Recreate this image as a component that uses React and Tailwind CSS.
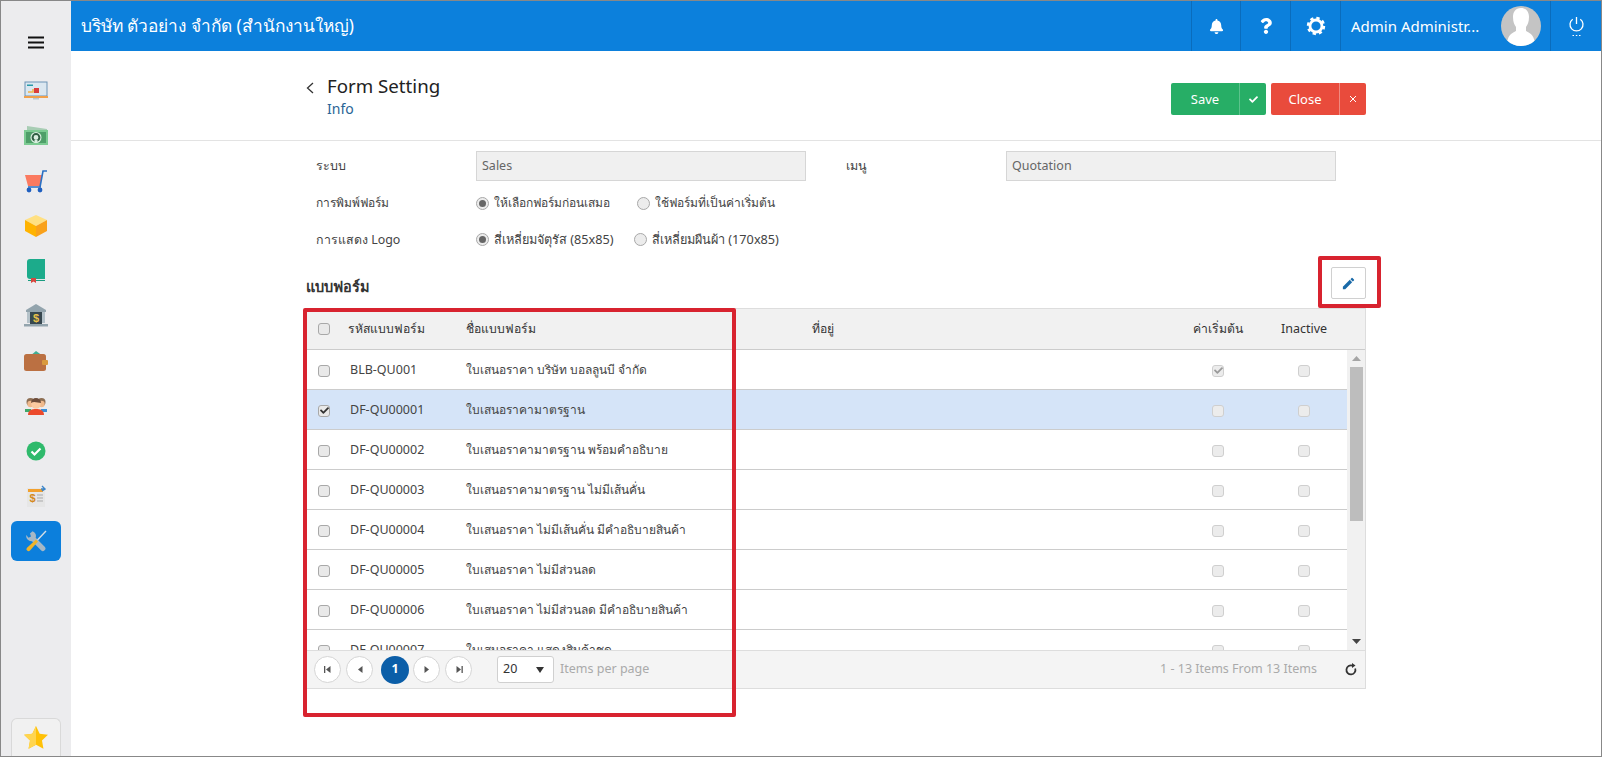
import React from "react";
import { FaBell, FaQuestion, FaCheck } from "react-icons/fa";
import { MdEdit } from "react-icons/md";

const Hamburger = () => (
  <svg width="16" height="13" viewBox="0 0 16 13"><path d="M0 1.500h16M0 6.500h16M0 11.500h16" stroke="#111" strokeWidth="2" /></svg>
);
const Board = () => (
  <svg width="24" height="20" viewBox="0 0 24 20"><rect x="1" y="1" width="22" height="14" fill="#dbe7f0" stroke="#6c93b5" strokeWidth="1" /><rect x="3" y="3.500" width="6" height="1.500" fill="#2b9aa8" /><rect x="10" y="7" width="5" height="5" fill="#d93c3c" /><path d="M4 11h5v-3" stroke="#f0b24a" strokeWidth="1.500" fill="none" /><rect x="0" y="15" width="24" height="2" fill="#f0a04b" /><rect x="9" y="17" width="6" height="1.500" fill="#b8c6d2" /></svg>
);
const Money = () => (
  <svg width="24" height="20" viewBox="0 0 24 20"><path d="M3 0l20 3v3H3z" fill="#a8cdb4" /><rect x="0" y="4" width="24" height="15" fill="#7ccb92" /><rect x="2" y="6" width="20" height="11" fill="#4f9f69" /><circle cx="12" cy="11.500" r="5.500" fill="#d9efdf" /><circle cx="12" cy="11.500" r="3.400" fill="none" stroke="#2f5f42" strokeWidth="2" /><rect x="10.500" y="14" width="3" height="3" fill="#d9efdf" /></svg>
);
const Cart = () => (
  <svg width="24" height="24" viewBox="0 0 24 24"><path d="M1 6h17l-2 11H4z" fill="#fb7a60" /><path d="M16 18L19 2h4" stroke="#2a70c4" strokeWidth="1.600" fill="none" /><path d="M4 18h13" stroke="#2a70c4" strokeWidth="1.500" /><circle cx="5" cy="21" r="2.400" fill="#1f5fc0" /><circle cx="16" cy="21" r="2.400" fill="#1f5fc0" /></svg>
);
const Box = () => (
  <svg width="24" height="24" viewBox="0 0 24 24"><path d="M12 1l11 5-11 6L1 6z" fill="#ffe082" /><path d="M1 6l11 6v11L1 17z" fill="#ffb300" /><path d="M23 6l-11 6v11l11-6z" fill="#f9a11b" /></svg>
);
const Book = () => (
  <svg width="18" height="24" viewBox="0 0 18 24"><path d="M0 3a3 3 0 0 1 3-3h15v20H3a3 3 0 0 1-3-3z" fill="#1cab8b" /><path d="M1 20h17v1.500H1z" fill="#dfe8e6" /><path d="M1 21h17v1H1z" fill="#1a9c80" /><path d="M4 19h5v5l-2.500-1.500L4 24z" fill="#d5483f" /></svg>
);
const Bank = () => (
  <svg width="24" height="23" viewBox="0 0 24 23"><path d="M12 0l10 6v2H2V6z" fill="#93a4ad" /><rect x="3" y="8" width="3" height="11" fill="#b5c2c9" /><rect x="18" y="8" width="3" height="11" fill="#b5c2c9" /><rect x="6" y="8" width="12" height="12" fill="#37474f" /><text x="12" y="18" textAnchor="middle" fontSize="11" fontWeight="700" fill="#e6c04a" fontFamily="Liberation Sans">$</text><rect x="0" y="20" width="24" height="2.500" fill="#93a4ad" /></svg>
);
const Wallet = () => (
  <svg width="24" height="22" viewBox="0 0 24 22"><path d="M6 6l6-5 7 5z" fill="#3fae92" /><rect x="0" y="4" width="22" height="17" rx="2.500" fill="#bb7042" /><rect x="18" y="10" width="6" height="5" rx="1" fill="#d99a3e" /></svg>
);
const People = () => (
  <svg width="22" height="20" viewBox="0 0 22 20"><circle cx="5.500" cy="6" r="4" fill="#8d6e52" /><circle cx="16.500" cy="6" r="4" fill="#8d6e52" /><circle cx="5.500" cy="8" r="3.200" fill="#f0b98c" /><circle cx="16.500" cy="8" r="3.200" fill="#f0b98c" /><path d="M0 13h6v3H0z" fill="#41a86a" /><path d="M16 13h6v3h-6z" fill="#3b8fd6" /><path d="M3 19c0-5 4-6 8-6s8 1 8 6z" fill="#ec4a2c" /><circle cx="11" cy="8" r="4.800" fill="#fbcaa0" /><path d="M6 7a5 5 0 0 1 10 0c-3 0-7-2-10 0z" fill="#6d4c3a" /></svg>
);
const CheckCircle = () => (
  <svg width="20" height="20" viewBox="0 0 20 20"><circle cx="10" cy="10" r="9.500" fill="#2fba6c" /><path d="M5.500 10.500l3 3 6-6" stroke="#fff" strokeWidth="2.200" fill="none" /></svg>
);
const Report = () => (
  <svg width="20" height="22" viewBox="0 0 20 22"><rect x="1" y="3" width="18" height="19" fill="#e6e6e6" /><rect x="2" y="4" width="15" height="3" fill="#f2a02e" /><path d="M15 4h3M16 1l3 3-3 2" stroke="#3f86c8" strokeWidth="1.400" fill="none" /><text x="6.500" y="17" textAnchor="middle" fontSize="11" fontWeight="700" fill="#d48a1e" fontFamily="Liberation Sans">$</text><path d="M11 10h6M11 13h6M11 16h6" stroke="#a9a9a9" strokeWidth="1" /></svg>
);
const Tools = () => (
  <svg width="22" height="22" viewBox="0 0 22 22"><path d="M7.500 1.200L5 3.500l1 3-2.500 1.300L1.300 5A5.200 5.200 0 0 0 7 11.200l9 9a2.400 2.400 0 0 0 3.700-3.500l-9-9A5.200 5.200 0 0 0 7.500 1.200z" fill="#a5b8c6" /><path d="M21 1l-8.500 9" stroke="#d5dee5" strokeWidth="1.400" /><path d="M11 9.500l2 2L5 20.500a1.900 1.900 0 0 1-3-2.800z" fill="#f0b429" /></svg>
);
const Star = () => (
  <svg width="24" height="23" viewBox="0 0 26 25"><path d="M13 0l4 8.300 9 1.200-6.500 6.300 1.600 9L13 20.500 4.900 24.800l1.600-9L0 9.500l9-1.200z" fill="#ffc107" /><path d="M13 0v20.500L4.900 24.800l1.600-9L0 9.500l9-1.200z" fill="#ffd54f" /></svg>
);

const sideIcons = [Board, Money, Cart, Box, Book, Bank, Wallet, People, CheckCircle, Report];

const Gear = () => (
  <svg width="20" height="20" viewBox="0 0 20 20"><circle cx="10" cy="10" r="6" fill="none" stroke="#fff" strokeWidth="2.800" /><circle cx="10" cy="10" r="8" fill="none" stroke="#fff" strokeWidth="2.400" strokeDasharray="3.300 3" /></svg>
);
const Power = () => (
  <svg width="15" height="21" viewBox="0 0 15 21" fill="none" stroke="#fff" strokeWidth="1.300"><path d="M7.500 1v7" /><path d="M3.700 3.200a6.500 6.500 0 1 0 7.600 0" /><path d="M3.500 19.500h1.500M6.800 19.500h1.500M10 19.500h1.500" strokeWidth="1" /></svg>
);
const Avatar = () => (
  <span className="w-[40px] h-[40px] rounded-full bg-[#c4c4c4] overflow-hidden flex">
    <svg width="40" height="40" viewBox="0 0 40 40"><path d="M20 2c5.500 0 8 4 8 9 0 5-1.500 8-3 10v4c3 2 9 3 9 15H6c0-12 6-13 9-15v-4c-1.500-2-3-5-3-10s2.500-9 8-9z" fill="#fff" /></svg>
  </span>
);

const Checkbox = ({ checked, faded }) => (
  <span className={"w-[12px] h-[12px] rounded-[3px] border flex items-center justify-center " + (faded ? "border-[#cfcfcf] bg-[#ececec]" : "border-[#a8a8a8] bg-[#e9e9e9]")}>
    {checked && <FaCheck className={"text-[9px] " + (faded ? "text-[#9a9a9a]" : "text-[#333]")} />}
  </span>
);

const Radio = ({ on }) => (
  <span className="w-[13px] h-[13px] rounded-full border border-[#a8a8a8] bg-[#ececec] flex items-center justify-center">
    {on && <span className="w-[7px] h-[7px] rounded-full bg-[#666]" />}
  </span>
);

const rows = [
  ["BLB-QU001", "ใบเสนอราคา บริษัท บอลลูนบี จำกัด"],
  ["DF-QU00001", "ใบเสนอราคามาตรฐาน"],
  ["DF-QU00002", "ใบเสนอราคามาตรฐาน พร้อมคำอธิบาย"],
  ["DF-QU00003", "ใบเสนอราคามาตรฐาน ไม่มีเส้นคั่น"],
  ["DF-QU00004", "ใบเสนอราคา ไม่มีเส้นคั่น มีคำอธิบายสินค้า"],
  ["DF-QU00005", "ใบเสนอราคา ไม่มีส่วนลด"],
  ["DF-QU00006", "ใบเสนอราคา ไม่มีส่วนลด มีคำอธิบายสินค้า"],
  ["DF-QU00007", "ใบเสนอราคา แสดงสินค้าชุด"],
];

const PagerBtn = ({ d, bar }) => (
  <span className="w-[27px] h-[27px] rounded-full border border-[#d5d5d5] bg-white flex items-center justify-center">
    <svg width="10" height="9" viewBox="0 0 10 9" fill="#555">
      {d === "l" ? <path d="M7.500 1v7L3 4.500z" /> : <path d="M2.500 1v7L7 4.500z" />}
      {bar && <rect x={d === "l" ? 1 : 7.5} y="1" width="1.300" height="7" />}
    </svg>
  </span>
);

export default function App() {
  return (
    <div className="relative w-[1602px] h-[757px] overflow-hidden border border-[#888] flex bg-white text-[#444] text-[12.500px] font-['Noto_Sans','DejaVu_Sans',sans-serif]">
      <aside className="w-[70px] shrink-0 bg-[#ececee] flex flex-col items-center">
        <div className="h-[67px] pt-[16px] flex items-center justify-center"><Hamburger /></div>
        <div className="flex flex-col items-center w-full">
          {sideIcons.map((Icon, i) => (
            <div key={i} className="h-[45px] w-full flex items-center justify-center"><Icon /></div>
          ))}
        </div>
        <div className="mt-[3px] w-[50px] h-[40px] rounded-[6px] bg-[#0c7fdc] flex items-center justify-center"><Tools /></div>
        <div className="mt-auto w-[50px] h-[38px] rounded-t-[6px] border border-b-0 border-[#d9d9d9] bg-[#f1f1f1] flex items-center justify-center"><Star /></div>
      </aside>

      <main className="flex-1 flex flex-col min-w-0">
        <header className="h-[50px] bg-[#0c80dc] flex items-center text-white shrink-0">
          <div className="flex-1 pl-[10px] text-[17.300px]">บริษัท ตัวอย่าง จำกัด (สำนักงานใหญ่)</div>
          <div className="w-[49px] h-full border-l border-[#0a6cbc] flex items-center justify-center"><FaBell className="text-[15px]" /></div>
          <div className="w-[50px] h-full border-l border-[#0a6cbc] flex items-center justify-center"><FaQuestion className="text-[16px]" /></div>
          <div className="w-[50px] h-full border-l border-[#0a6cbc] flex items-center justify-center"><Gear /></div>
          <div className="w-[210px] h-full border-l border-[#0a6cbc] flex items-center pl-[10px] gap-[20px]">
            <span className="w-[130px] text-[15px] whitespace-nowrap">Admin Administr...</span>
            <Avatar />
          </div>
          <div className="w-[51px] h-full border-l border-[#0a6cbc] flex items-center justify-center"><Power /></div>
        </header>

        <div className="h-[90px] shrink-0 border-b border-[#e3e3e3] pl-[235px] pr-[235px] flex justify-between">
          <div className="flex items-start pt-[22px]">
            <svg className="mt-[9px]" width="8" height="12" viewBox="0 0 8 12" fill="none" stroke="#333" strokeWidth="1.300"><path d="M7 1L1.500 6 7 11" /></svg>
            <div className="ml-[13px]">
              <div className="text-[18.700px] leading-[26px] text-[#222]">Form Setting</div>
              <div className="text-[14px] leading-[20px] text-[#2a6496]">Info</div>
            </div>
          </div>
          <div className="flex gap-[5px] pt-[32px] text-white text-[13px]">
            <div className="flex h-[32px] rounded-[2px] bg-[#27ae66] w-[95px]">
              <span className="w-[69px] pt-[1px] flex items-center justify-center border-r border-[#5cc38c]">Save</span>
              <span className="flex-1 flex items-center justify-center"><FaCheck className="text-[9px]" /></span>
            </div>
            <div className="flex h-[32px] rounded-[2px] bg-[#e94b3c] w-[95px]">
              <span className="w-[69px] pt-[1px] flex items-center justify-center border-r border-[#f08a80]">Close</span>
              <span className="flex-1 flex items-center justify-center">
                <svg width="8" height="8" viewBox="0 0 8 8" stroke="#fff" strokeWidth="1"><path d="M1 1l6 6M7 1L1 7" /></svg>
              </span>
            </div>
          </div>
        </div>

        <div className="pl-[235px] w-[1295px] flex flex-col pt-[10px]">
          <div className="flex flex-col gap-[7px] pl-[10px]">
            <div className="flex h-[30px] items-center">
              <span className="w-[160px]">ระบบ</span>
              <span className="w-[330px] h-[30px] border border-[#d6d6d6] bg-[#f0f0f0] px-[5px] pt-[1px] flex items-center text-[#666]">Sales</span>
              <span className="ml-[40px] w-[160px]">เมนู</span>
              <span className="w-[330px] h-[30px] border border-[#d6d6d6] bg-[#f0f0f0] px-[5px] pt-[1px] flex items-center text-[#666]">Quotation</span>
            </div>
            <div className="flex h-[30px] items-center text-[12px]">
              <span className="w-[160px]">การพิมพ์ฟอร์ม</span>
              <span className="flex items-center gap-[5px] w-[161px]"><Radio on />ให้เลือกฟอร์มก่อนเสมอ</span>
              <span className="flex items-center gap-[5px]"><Radio />ใช้ฟอร์มที่เป็นค่าเริ่มต้น</span>
            </div>
            <div className="flex h-[30px] items-center text-[12.700px]">
              <span className="w-[160px] text-[12.400px]">การแสดง Logo</span>
              <span className="flex items-center gap-[5px] w-[158px]"><Radio on />สี่เหลี่ยมจัตุรัส (85x85)</span>
              <span className="flex items-center gap-[5px]"><Radio />สี่เหลี่ยมผืนผ้า (170x85)</span>
            </div>
          </div>

          <div className="mt-[12px] h-[32px] flex items-center justify-between">
            <span className="pt-[8px] text-[14.500px] font-bold text-[#333]">แบบฟอร์ม</span>
            <span className="w-[35px] h-[32px] border border-[#d0d0d0] rounded-[2px] flex items-center justify-center"><MdEdit className="text-[15px] text-[#1a6aa8]" /></span>
          </div>

          <div className="mt-[9px] w-[1060px] border border-[#ddd] border-b-0">
            <div className="h-[41px] flex items-center bg-[#f1f1f1] border-b border-[#ccc] pr-[18px] text-[#333] text-[12.200px]">
              <span className="w-[34px] flex justify-center"><Checkbox /></span>
              <span className="w-[125px] pl-[7px]">รหัสแบบฟอร์ม</span>
              <span className="w-[346px]">ชื่อแบบฟอร์ม</span>
              <span className="flex-1">ที่อยู่</span>
              <span className="w-[86px] text-center">ค่าเริ่มต้น</span>
              <span className="w-[86px] text-center text-[12.500px]">Inactive</span>
            </div>
            <div className="h-[300px] flex overflow-hidden">
              <div className="flex-1 min-w-0">
                {rows.map((r, i) => (
                  <div key={r[0]} className={"h-[40px] pt-[2px] flex items-center border-b border-[#ccc] " + (i === 1 ? "bg-[#d5e4f8]" : "bg-white")}>
                    <span className="w-[34px] flex justify-center"><Checkbox checked={i === 1} /></span>
                    <span className="w-[125px] pl-[9px]">{r[0]}</span>
                    <span className="flex-1 text-[12px] -mt-[2px]">{r[1]}</span>
                    <span className="w-[86px] flex justify-center"><Checkbox faded checked={i === 0} /></span>
                    <span className="w-[86px] flex justify-center"><Checkbox faded /></span>
                  </div>
                ))}
              </div>
              <div className="w-[18px] bg-[#f1f1f1] flex flex-col items-center">
                <svg className="mt-[6px]" width="9" height="5" viewBox="0 0 9 5" fill="#a5a5a5"><path d="M4.500 0L9 5H0z" /></svg>
                <div className="mt-[6px] w-[13px] h-[154px] bg-[#bdbdbd]" />
                <svg className="mt-auto mb-[6px]" width="9" height="5" viewBox="0 0 9 5" fill="#444"><path d="M0 0h9L4.500 5z" /></svg>
              </div>
            </div>
            <div className="h-[39px] flex items-center bg-[#f4f4f4] border-y border-[#ddd] pl-[7px] pr-[7px]">
              <PagerBtn d="l" bar />
              <span className="ml-[5px]"><PagerBtn d="l" /></span>
              <span className="ml-[8px] w-[28px] h-[28px] rounded-full bg-[#0b5ea8] text-white font-bold flex items-center justify-center">1</span>
              <span className="ml-[4px]"><PagerBtn d="r" /></span>
              <span className="ml-[5px]"><PagerBtn d="r" bar /></span>
              <span className="ml-[25px] w-[57px] h-[27px] rounded-[3px] border border-[#d0d0d0] bg-white flex items-center justify-between pl-[5px] pr-[9px] text-[#333]">20
                <svg width="8" height="6" viewBox="0 0 8 6" fill="#333"><path d="M0 0h8L4 6z" /></svg>
              </span>
              <span className="ml-[6px] text-[#aaa]">Items per page</span>
              <span className="ml-auto text-[#aaa]">1 - 13 Items From 13 Items</span>
              <svg className="ml-[28px] mr-[1px]" width="12" height="13" viewBox="0 0 12 13" fill="none" stroke="#333" strokeWidth="1.800"><path d="M10.200 5.500A4.500 4.500 0 1 1 7.500 2.700" /><path d="M7 0v5l3.500-2.500z" fill="#333" stroke="none" /></svg>
            </div>
          </div>
        </div>
      </main>

      <div className="absolute left-[302px] top-[307px] w-[433px] h-[409px] border-[4px] border-[#d8232f] rounded-[2px]" />
      <div className="absolute left-[1317px] top-[255px] w-[63px] h-[52px] border-[4px] border-[#d8232f] rounded-[2px]" />
    </div>
  );
}
